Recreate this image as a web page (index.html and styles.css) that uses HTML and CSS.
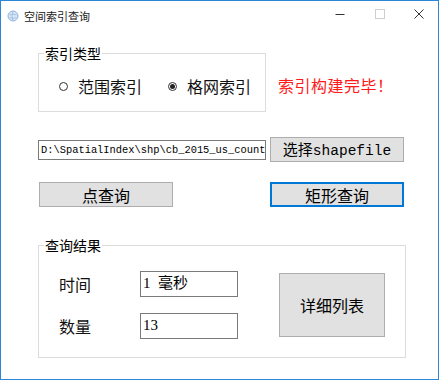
FILE: index.html
```html
<!DOCTYPE html>
<html lang="zh">
<head>
<meta charset="utf-8">
<title>空间索引查询</title>
<link rel="stylesheet" href="styles.css">
</head>
<body>
<div class="window">
  <div class="titlebar">
    <svg class="app-icon" width="12" height="12" viewBox="0 0 12 12">
      <circle cx="6" cy="6" r="5" fill="#d6e6f7" stroke="#8fb4de" stroke-width="1"/>
      <path d="M2.5 5 Q6 3 9.5 5 M2.5 7.5 Q6 9.5 9.5 7.5 M6 1.5 Q4 6 6 10.5" fill="none" stroke="#9bbbe0" stroke-width="0.8"/>
    </svg>
    <span class="title">空间索引查询</span>
    <div class="controls">
      <span class="ctl"><svg width="10" height="10" viewBox="0 0 10 10"><path d="M0.5 5.5 H9.5" stroke="#333" stroke-width="1"/></svg></span>
      <span class="ctl"><svg width="10" height="10" viewBox="0 0 10 10"><rect x="0.5" y="0.5" width="9" height="9" fill="none" stroke="#cfcfcf" stroke-width="1"/></svg></span>
      <span class="ctl close"><svg width="10" height="10" viewBox="0 0 10 10"><path d="M0.5 0.5 L9.5 9.5 M9.5 0.5 L0.5 9.5" stroke="#333" stroke-width="1"/></svg></span>
    </div>
  </div>
  <div class="content">
    <div class="row row-type">
      <fieldset class="group group-type">
        <legend>索引类型</legend>
        <div class="radios">
          <label class="radio"><span class="dot"></span>范围索引</label>
          <label class="radio"><span class="dot checked"></span>格网索引</label>
        </div>
      </fieldset>
      <div class="status">索引构建完毕！</div>
    </div>
    <div class="row row-file">
      <div class="textbox path">D:\SpatialIndex\shp\cb_2015_us_count</div>
      <button class="btn btn-file">选择<span class="latin">shapefile</span></button>
    </div>
    <div class="row row-query">
      <button class="btn btn-point">点查询</button>
      <button class="btn btn-rect focused">矩形查询</button>
    </div>
    <fieldset class="group group-result">
      <legend>查询结果</legend>
      <div class="result">
        <div class="fields">
          <div class="field"><span class="label">时间</span><div class="textbox value">1&nbsp;&nbsp;毫秒</div></div>
          <div class="field"><span class="label">数量</span><div class="textbox value">13</div></div>
        </div>
        <button class="btn btn-list">详细列表</button>
      </div>
    </fieldset>
  </div>
</div>
</body>
</html>
```
FILE: styles.css
```css
html, body {
  margin: 0;
  padding: 0;
  background: #fff;
}

.window {
  width: 439px;
  height: 380px;
  box-sizing: border-box;
  border: 1px solid #2c86d8;
  background: #fff;
  font-family: "Noto Sans CJK SC", "Microsoft YaHei", sans-serif;
  color: #000;
  overflow: hidden;
}

.titlebar {
  height: 29px;
  display: flex;
  align-items: center;
}

.app-icon {
  margin-left: 6px;
  margin-right: 5px;
  margin-top: 1px;
}

.title {
  font-size: 11px;
  line-height: 14px;
  color: #222;
  margin-top: 1px;
}

.controls {
  margin-left: auto;
  display: flex;
  height: 29px;
}

.ctl {
  width: 40px;
  display: flex;
  align-items: center;
  justify-content: center;
  margin-top: -3px;
}

.ctl.close {
  width: 38px;
}

.ctl svg {
  display: block;
}

.content {
  padding-left: 37px;
}

.row {
  display: flex;
}

.row-type {
  margin-top: 15px;
  align-items: flex-start;
}

.group {
  margin: 0;
  padding: 0;
  border: 1px solid #dcdcdc;
  min-width: 0;
  box-sizing: border-box;
}

.group legend {
  margin-left: 5px;
  padding: 0 1px;
  font-size: 14px;
  line-height: 16px;
  color: #000;
}

.group-type {
  width: 228px;
  flex-shrink: 0;
}

.radios {
  display: flex;
  padding: 15px 0 15px 20px;
  font-size: 16px;
  line-height: 20px;
  white-space: nowrap;
}

.radio {
  display: flex;
  align-items: center;
  flex-shrink: 0;
  color: #111;
}

.radio + .radio {
  margin-left: 26px;
}

.dot {
  width: 9px;
  height: 9px;
  flex-shrink: 0;
  box-sizing: border-box;
  border: 1px solid #333;
  border-radius: 50%;
  margin-right: 10px;
  display: flex;
  align-items: center;
  justify-content: center;
}

.dot.checked::after {
  content: "";
  width: 5px;
  height: 5px;
  border-radius: 50%;
  background: #222;
}

.status {
  margin-left: 12px;
  margin-top: 30px;
  font-size: 16px;
  line-height: 20px;
  color: #ff1a1a;
  letter-spacing: 0.5px;
  white-space: nowrap;
}

.row-file {
  margin-top: 25px;
  align-items: center;
}

.textbox {
  box-sizing: border-box;
  border: 1px solid #7a7a7a;
  background: #fff;
  white-space: nowrap;
  overflow: hidden;
}

.path {
  width: 228px;
  height: 20px;
  flex-shrink: 0;
  padding-left: 2px;
  font-family: "Liberation Mono", monospace;
  font-size: 10.4px;
  line-height: 18px;
  color: #000;
}

.btn {
  box-sizing: border-box;
  width: 134px;
  height: 25px;
  flex-shrink: 0;
  margin: 0;
  padding: 0;
  border: 1px solid #adadad;
  background: #e1e1e1;
  font-family: "Noto Sans CJK SC", "Microsoft YaHei", sans-serif;
  font-size: 16px;
  line-height: 20px;
  color: #000;
  white-space: nowrap;
}

.btn-file {
  margin-left: 4px;
  font-size: 15px;
}

.latin {
  font-family: "Liberation Mono", monospace;
  font-size: 14.5px;
}

.row-query {
  margin-top: 20px;
}

.btn-point {
  margin-left: 1px;
}

.btn-rect {
  margin-left: 97px;
}

.btn.focused {
  border: 2px solid #0078d7;
}

.group-result {
  margin-top: 30px;
  width: 368px;
}

.result {
  display: flex;
  align-items: center;
  padding: 18px 0 18px 20px;
}

.fields {
  display: flex;
  flex-direction: column;
  gap: 16px;
}

.field {
  display: flex;
  align-items: center;
}

.label {
  width: 81px;
  font-size: 16px;
  line-height: 20px;
  color: #111;
}

.value {
  width: 98px;
  height: 26px;
  padding-left: 2px;
  font-family: "Liberation Serif", "Noto Sans CJK SC", serif;
  font-size: 15px;
  line-height: 22px;
}

.btn-list {
  width: 106px;
  height: 64px;
  margin-left: 41px;
}
```
